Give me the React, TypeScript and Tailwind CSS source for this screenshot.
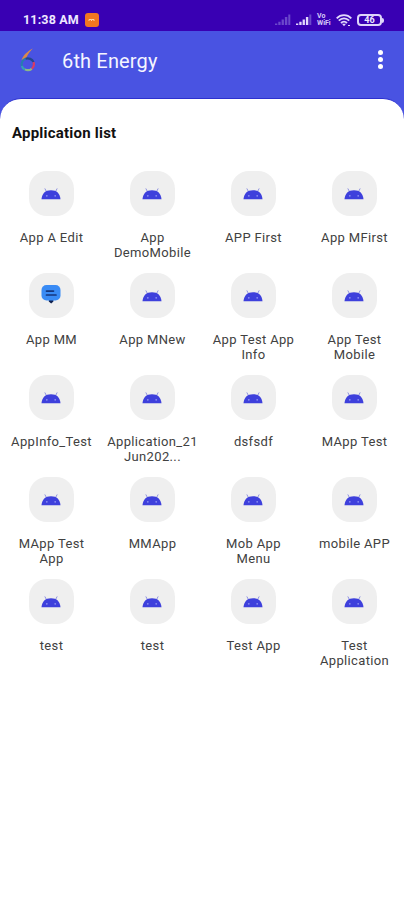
import React from "react";

type AppItem = { lines: string[]; chat?: boolean };

const apps: AppItem[] = [
  { lines: ["App A Edit"] },
  { lines: ["App", "DemoMobile"] },
  { lines: ["APP First"] },
  { lines: ["App MFirst"] },
  { lines: ["App MM"], chat: true },
  { lines: ["App MNew"] },
  { lines: ["App Test App", "Info"] },
  { lines: ["App Test", "Mobile"] },
  { lines: ["AppInfo_Test"] },
  { lines: ["Application_21", "Jun202..."] },
  { lines: ["dsfsdf"] },
  { lines: ["MApp Test"] },
  { lines: ["MApp Test", "App"] },
  { lines: ["MMApp"] },
  { lines: ["Mob App", "Menu"] },
  { lines: ["mobile APP"] },
  { lines: ["test"] },
  { lines: ["test"] },
  { lines: ["Test App"] },
  { lines: ["Test", "Application"] },
];

function AndroidIcon() {
  return (
    <svg width="20" height="12" viewBox="0 0 20 12">
      <path d="M4 .8 5.300 3.300M16 .8 14.700 3.300" stroke="#8588de" strokeWidth="0.9" strokeLinecap="round" />
      <path d="M.5 11.200C1 5.500 4.200 2.200 10 2.200s9 3.300 9.500 9Z" fill="#3e40dc" />
      <circle cx="5.800" cy="7.800" r="0.9" fill="#8b8ef0" />
      <circle cx="14.200" cy="7.800" r="0.9" fill="#8b8ef0" />
    </svg>
  );
}

function ChatIcon() {
  return (
    <svg width="20" height="20" viewBox="0 0 20 20" className="-mt-[3px]">
      <path d="M7.800 15.500h4.600v2L10.200 19.500 7.800 17.500Z" fill="#10204f" />
      <rect x="0.500" y="1" width="19" height="15.500" rx="5" fill="#398bf5" />
      <path d="M5.500 7.100h7M5.500 11h9.500" stroke="#14367e" strokeWidth="1.700" strokeLinecap="round" />
    </svg>
  );
}

function Logo() {
  return (
    <svg width="16" height="24" viewBox="0 0 16 24" fill="none" strokeWidth="2.200">
      <path d="M12.800.5C7.500 3.300 3 7.300 1.500 12.300L6.300 9.800C7.500 6.500 10 3.500 12.800.5Z" fill="#d98a4b" />
      <path d="M1.900 18c-.8-3 .6-6.200 3.700-7.300" stroke="#287cb0" />
      <path d="M5.600 10.700c3-1 6.600.3 7.900 3.500" stroke="#21478f" />
      <path d="M13.500 14.200c.9 2.500.2 4.900-1.800 6.600" stroke="#d83b62" />
      <path d="M11.700 20.800c-2 1.600-4.700 1.700-6.800.6" stroke="#8db886" />
      <path d="M4.900 21.400C3.300 20.700 2.200 19.600 1.900 18" stroke="#35a3b5" />
    </svg>
  );
}

function Signal({ faint = false }: { faint?: boolean }) {
  return (
    <svg width="16" height="12" viewBox="0 0 16 12" fill={faint ? "#6b48cb" : "#e2d9fc"}>
      <path d="M0 9.500h2.300V11H0zM3.300 7.800h2.300V11H3.300zM6.600 5.500h2.300V11H6.600zM9.900 3h2.400v8H9.900z" />
      <path d="M13.300.5h2V11h-2z" fill="#6b48cb" />
    </svg>
  );
}

function StatusBar() {
  return (
    <div className="flex h-[31px] items-center bg-[#3900b3] pl-[23px] pr-[20px] pt-[9px] text-[#eee8ff]">
      <span className="w-[57px] whitespace-nowrap text-[12.500px] font-bold leading-4 tracking-[0.15px]">11:38 AM</span>
      <span className="ml-[5px] flex h-[14px] w-[14px] items-center justify-center rounded-[3px] bg-[#f27620]">
        <svg width="8" height="4" viewBox="0 0 8 4" fill="none" stroke="#ffd6a6">
          <path d="M1 3V1.500h2.500V3M3.500 1.500H6V3" />
        </svg>
      </span>
      <div className="ml-auto flex items-center">
        <Signal faint />
        <span className="ml-[5px] flex"><Signal /></span>
        <span className="ml-[5px] flex w-[14px] flex-col text-[7px] font-bold text-[#d6caf7]">
          <span className="h-[7px] leading-[7px]">Vo</span>
          <span className="h-[7px] leading-[7px]">WiFi</span>
        </span>
        <svg className="ml-[5px]" width="16" height="13" viewBox="0 0 16 13" fill="none" stroke="#e2d9fc" strokeWidth="1.800">
          <path d="M.7 4.300C4.800.1 11.200.1 15.300 4.300M2.800 6.700c3-3 7.400-3 10.400 0M5 9c1.800-1.800 4.200-1.800 6 0" />
          <path d="m6 9.700 2 2.600 2-2.600Z" fill="#e2d9fc" stroke="none" />
          <path d="M12 11.500h2" strokeWidth="1.200" />
        </svg>
        <div className="ml-[5px] flex items-center">
          <span className="flex h-3 w-[25px] items-center justify-center rounded-[4px] border-2 border-[#ded5fa] text-[9px] font-bold leading-none">46</span>
          <span className="h-[5px] w-[2px] rounded-r bg-[#ded5fa]" />
        </div>
      </div>
    </div>
  );
}

export default function App() {
  return (
    <div className="flex h-[900px] w-[404px] flex-col overflow-hidden bg-[#4953e2] font-['Roboto','Noto_Sans',sans-serif]">
      <StatusBar />
      <header className="flex h-[67px] items-start pl-5 pr-[20px]">
        <span className="mt-[17px] flex w-[42px]"><Logo /></span>
        <h1 className="mt-[18px] text-[20px] leading-6 tracking-[0.15px] text-[#f5f5ff]">6th Energy</h1>
        <span className="ml-auto mt-[19px] flex w-[6px] flex-col gap-[2px]">
          <i className="h-[5px] w-[5px] rounded-full bg-white" />
          <i className="h-[5px] w-[5px] rounded-full bg-white" />
          <i className="h-[5px] w-[5px] rounded-full bg-white" />
        </span>
      </header>
      <main className="flex-1 rounded-t-[21px] border-t border-[#2c30cf] bg-white">
        <h2 className="ml-3 mt-[24px] text-[15px] font-bold leading-5 tracking-[0.22px] text-[#111]">Application list</h2>
        <div className="mt-[28px] grid auto-rows-[102px] grid-cols-[repeat(4,101px)]">
          {apps.map((app, i) => (
            <div key={i} className="flex flex-col items-center pl-px">
              <div className="flex h-[45px] w-[45px] shrink-0 items-center justify-center rounded-[18px] bg-[#efefef]">
                {app.chat ? <ChatIcon /> : <AndroidIcon />}
              </div>
              <div className="mt-[14px] flex flex-col items-center whitespace-nowrap pl-px text-[13px] leading-[15px] tracking-[0.35px] text-[#414141]">
                {app.lines.map((line) => <span key={line}>{line}</span>)}
              </div>
            </div>
          ))}
        </div>
      </main>
    </div>
  );
}
